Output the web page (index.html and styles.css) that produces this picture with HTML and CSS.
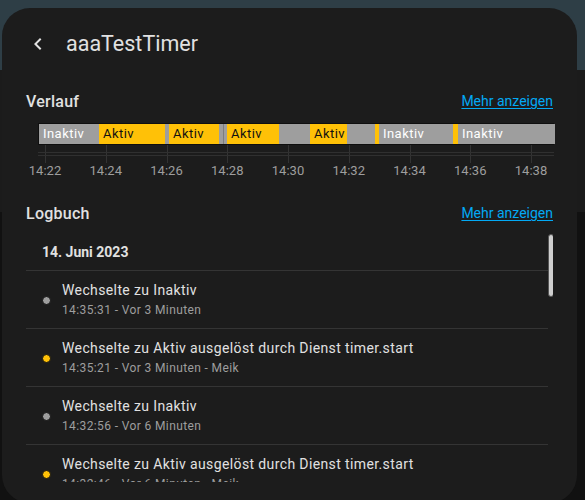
FILE: index.html
```html
<!DOCTYPE html>
<html lang="de">
<head>
<meta charset="utf-8">
<title>aaaTestTimer</title>
<link rel="stylesheet" href="styles.css">
</head>
<body>
<div class="dialog">
  <header class="head">
    <svg class="back" viewBox="0 0 24 24" width="24" height="24" aria-hidden="true"><path d="M15.41,16.58L10.83,12L15.41,7.41L14,6L8,12L14,18L15.41,16.58Z"/></svg>
    <h1 class="title">aaaTestTimer</h1>
  </header>

  <section>
    <div class="sec-head">
      <h2>Verlauf</h2>
      <a class="more" href="#">Mehr anzeigen</a>
    </div>
    <div class="timeline">
      <span class="gl" style="left:19px"></span>
      <span class="gl" style="left:79.75px"></span>
      <span class="gl" style="left:140.5px"></span>
      <span class="gl" style="left:201.25px"></span>
      <span class="gl" style="left:262px"></span>
      <span class="gl" style="left:322.75px"></span>
      <span class="gl" style="left:383.5px"></span>
      <span class="gl" style="left:444.25px"></span>
      <span class="gl" style="left:505px"></span>
      <div class="bar">
        <span class="seg off" style="width:60px">Inaktiv</span>
        <span class="seg on" style="width:66px">Aktiv</span>
        <span class="seg off" style="width:2px"></span>
        <span class="seg on" style="width:50px">Aktiv</span>
        <span class="seg off split" style="width:8px"></span>
        <span class="seg on" style="width:52px">Aktiv</span>
        <span class="seg off" style="width:31px"></span>
        <span class="seg on" style="width:37px">Aktiv</span>
        <span class="seg off" style="width:28px"></span>
        <span class="seg on" style="width:4px"></span>
        <span class="seg off" style="width:74px">Inaktiv</span>
        <span class="seg on" style="width:5px"></span>
        <span class="seg off" style="width:97px">Inaktiv</span>
      </div>
      <span class="axis a1"></span>
      <span class="axis a2"></span>
      <span class="tick" style="left:19px">14:22</span>
      <span class="tick" style="left:79.75px">14:24</span>
      <span class="tick" style="left:140.5px">14:26</span>
      <span class="tick" style="left:201.25px">14:28</span>
      <span class="tick" style="left:262px">14:30</span>
      <span class="tick" style="left:322.75px">14:32</span>
      <span class="tick" style="left:383.5px">14:34</span>
      <span class="tick" style="left:444.25px">14:36</span>
      <span class="tick" style="left:505px">14:38</span>
    </div>
  </section>

  <section>
    <div class="sec-head">
      <h2>Logbuch</h2>
      <a class="more" href="#">Mehr anzeigen</a>
    </div>
    <div class="log">
      <div class="list">
        <div class="date">14. Juni 2023</div>
        <div class="entry">
          <span class="dot off"></span>
          <div class="txt">
            <div class="msg">Wechselte zu Inaktiv</div>
            <div class="sub">14:35:31 - Vor 3 Minuten</div>
          </div>
        </div>
        <div class="entry">
          <span class="dot on"></span>
          <div class="txt">
            <div class="msg">Wechselte zu Aktiv ausgelöst durch Dienst timer.start</div>
            <div class="sub">14:35:21 - Vor 3 Minuten - Meik</div>
          </div>
        </div>
        <div class="entry">
          <span class="dot off"></span>
          <div class="txt">
            <div class="msg">Wechselte zu Inaktiv</div>
            <div class="sub">14:32:56 - Vor 6 Minuten</div>
          </div>
        </div>
        <div class="entry">
          <span class="dot on"></span>
          <div class="txt">
            <div class="msg">Wechselte zu Aktiv ausgelöst durch Dienst timer.start</div>
            <div class="sub">14:32:46 - Vor 6 Minuten - Meik</div>
          </div>
        </div>
      </div>
      <span class="thumb"></span>
    </div>
  </section>
</div>
</body>
</html>
```

FILE: styles.css
```css
html, body {
  margin: 0;
  padding: 0;
}
body {
  width: 585px;
  height: 500px;
  overflow: hidden;
  background: linear-gradient(to bottom, #2e3e46 0, #2e3e46 70px, #1b1b1b 70px, #1b1b1b 212px, #111 212px);
  font-family: Roboto, "Noto Sans", sans-serif;
  color: #e1e1e1;
}
.dialog {
  box-sizing: border-box;
  margin: 8px 0 0 2px;
  width: 575px;
  height: 495px;
  padding: 0 24px;
  background: #1c1c1c;
  border-radius: 28px;
  overflow: hidden;
}
.head {
  height: 72px;
  display: flex;
  align-items: center;
  gap: 16px;
}
.back {
  fill: #e1e1e1;
  flex: none;
}
.title {
  margin: 0;
  font-size: 21.5px;
  font-weight: 400;
  line-height: 1;
  color: #e1e1e1;
}
.sec-head {
  margin-top: 9px;
  height: 24px;
  display: flex;
  align-items: center;
  justify-content: space-between;
}
.sec-head h2 {
  margin: 0;
  font-size: 16px;
  font-weight: 500;
  letter-spacing: 0.25px;
  color: #e1e1e1;
}
.more {
  font-size: 14px;
  color: #03a9f4;
  text-decoration: underline;
  text-underline-offset: 2px;
}
.timeline {
  position: relative;
  margin-top: 10px;
  height: 69px;
}
.gl {
  position: absolute;
  top: 0;
  width: 1px;
  height: 40px;
  background: #333;
}
.bar {
  position: relative;
  z-index: 1;
  box-sizing: border-box;
  margin: 5px 0 0 12px;
  width: 516px;
  height: 22px;
  border: 1px solid #0f0f0f;
  display: flex;
}
.seg {
  flex: none;
  height: 20px;
  box-sizing: border-box;
  padding-left: 4px;
  font-size: 13px;
  line-height: 20px;
  letter-spacing: 0.45px;
  overflow: hidden;
  white-space: nowrap;
}
.seg.off {
  background: #9e9e9e;
  color: #fff;
}
.seg.on {
  background: #ffc107;
  color: #111;
}
.seg.split {
  background: linear-gradient(to right, #9e9e9e 0, #9e9e9e 4px, #7d7d7d 4px, #7d7d7d 5px, #9e9e9e 5px);
}
.axis {
  position: absolute;
  left: 12px;
  width: 516px;
  height: 1px;
  background: #303030;
}
.a1 { top: 29px; }
.a2 { top: 32px; }
.tick {
  position: absolute;
  top: 40px;
  transform: translateX(-50%);
  font-size: 13px;
  line-height: 16px;
  color: #9e9e9e;
  white-space: nowrap;
}
.log {
  position: relative;
  margin-top: 9px;
  height: 248px;
  overflow: hidden;
}
.list {
  margin-right: 5px;
}
.date {
  height: 36px;
  padding-left: 16px;
  display: flex;
  align-items: center;
  font-size: 14px;
  font-weight: 700;
  color: #e1e1e1;
}
.entry {
  display: flex;
  align-items: center;
  gap: 11px;
  padding: 9px 0 8px 16px;
  border-top: 1px solid #343434;
}
.dot {
  flex: none;
  box-sizing: border-box;
  width: 9px;
  height: 9px;
  border-radius: 50%;
  border: 1px solid #111;
}
.dot.off { background: #9e9e9e; }
.dot.on { background: #ffc107; }
.msg {
  font-size: 14px;
  line-height: 20px;
  letter-spacing: 0.38px;
  color: #e1e1e1;
  white-space: nowrap;
}
.sub {
  font-size: 12px;
  line-height: 20px;
  letter-spacing: 0.38px;
  color: #9e9e9e;
  white-space: nowrap;
}
.thumb {
  position: absolute;
  top: 0;
  right: -1px;
  width: 6px;
  height: 63px;
  box-sizing: border-box;
  border-radius: 3px;
  background: #cfcfcf;
  border: 1px solid #555;
}
```
